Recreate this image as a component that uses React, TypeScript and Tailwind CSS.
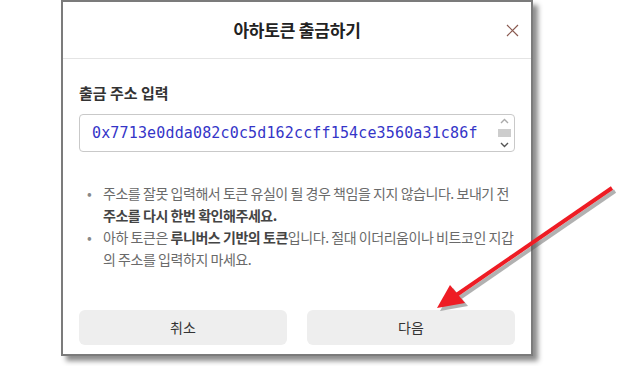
import React from 'react';

const kr = { fontFamily: '"Noto Sans CJK KR", "Noto Sans", sans-serif' };

export default function App() {
  return (
    <div className="relative w-[636px] h-[366px] bg-white overflow-hidden" style={kr}>
      <div className="pl-[61px]">
        <div className="w-[472px] h-[356px] border-2 border-[#7b7b7b] bg-white shadow-[5px_5px_5px_rgba(0,0,0,0.45)] flex flex-col">
          <div className="relative h-[57px] shrink-0 border-b border-[#e4e4e4] flex items-center justify-center">
            <span className="text-[17px] font-bold text-[#222] tracking-[-0.2px]">아하토큰 출금하기</span>
            <svg className="absolute right-[12px] top-[22px]" width="13" height="13" viewBox="0 0 13 13">
              <path d="M1 1L12 12M12 1L1 12" stroke="#8a5a50" strokeWidth="1.2" />
            </svg>
          </div>
          <div className="flex-1 flex flex-col px-[16px] pt-[24px] pb-[9px]">
            <div className="text-[15px] leading-[20px] font-bold text-[#333]">출금 주소 입력</div>
            <div className="mt-[11px] h-[38px] border border-[#c9c9c9] rounded-[4px] flex items-center overflow-hidden">
              <div
                className="flex-1 pl-[12px] text-[15px] text-[#3535c8] whitespace-nowrap overflow-hidden"
                style={{ fontFamily: '"DejaVu Sans Mono", monospace', letterSpacing: '0.15px' }}
              >
                0x7713e0dda082c0c5d162ccff154ce3560a31c86f
              </div>
              <div className="w-[15px] h-full flex flex-col items-center justify-between py-[3px] mr-[2px]">
                <svg width="9" height="6" viewBox="0 0 9 6"><path d="M1 5L4.5 1.5L8 5" stroke="#aaa" strokeWidth="1.4" fill="none" /></svg>
                <div className="w-[13px] h-[8px] bg-[#cdcdcd]" />
                <svg width="9" height="6" viewBox="0 0 9 6"><path d="M1 1L4.5 4.5L8 1" stroke="#555" strokeWidth="1.4" fill="none" /></svg>
              </div>
            </div>
            <ul className="mt-[30px] pl-[8px] text-[14px] leading-[22px] text-[#6a6a6a] tracking-[-0.45px] whitespace-nowrap">
              <li className="flex">
                <span className="w-[16px] shrink-0 text-[#888]">•</span>
                <span>
                  주소를 잘못 입력해서 토큰 유실이 될 경우 책임을 지지 않습니다. 보내기 전
                  <br />
                  <b className="font-bold text-[#444]">주소를 다시 한번 확인해주세요.</b>
                </span>
              </li>
              <li className="flex">
                <span className="w-[16px] shrink-0 text-[#888]">•</span>
                <span>
                  아하 토큰은 <b className="font-bold text-[#444]">루니버스 기반의 토큰</b>입니다. 절대 이더리움이나 비트코인 지갑
                  <br />
                  의 주소를 입력하지 마세요.
                </span>
              </li>
            </ul>
            <div className="mt-auto flex gap-[20px]">
              <button className="w-[210px] h-[35px] rounded-[6px] bg-[#eeeeee] text-[14px] text-[#333]">취소</button>
              <button className="w-[210px] h-[35px] rounded-[6px] bg-[#eeeeee] text-[14px] text-[#333]">다음</button>
            </div>
          </div>
        </div>
      </div>
      <svg className="absolute left-0 top-0 pointer-events-none" width="636" height="366" viewBox="0 0 636 366">
        <g transform="translate(3,3)" opacity="0.45">
          <line x1="612" y1="188" x2="455" y2="296" stroke="#555" strokeWidth="4" />
          <polygon points="437,308 450,285 465,303" fill="#555" />
        </g>
        <line x1="612" y1="188" x2="455" y2="296" stroke="#ee1c24" strokeWidth="4" />
        <polygon points="437,308 450,285 465,303" fill="#ee1c24" />
      </svg>
    </div>
  );
}
